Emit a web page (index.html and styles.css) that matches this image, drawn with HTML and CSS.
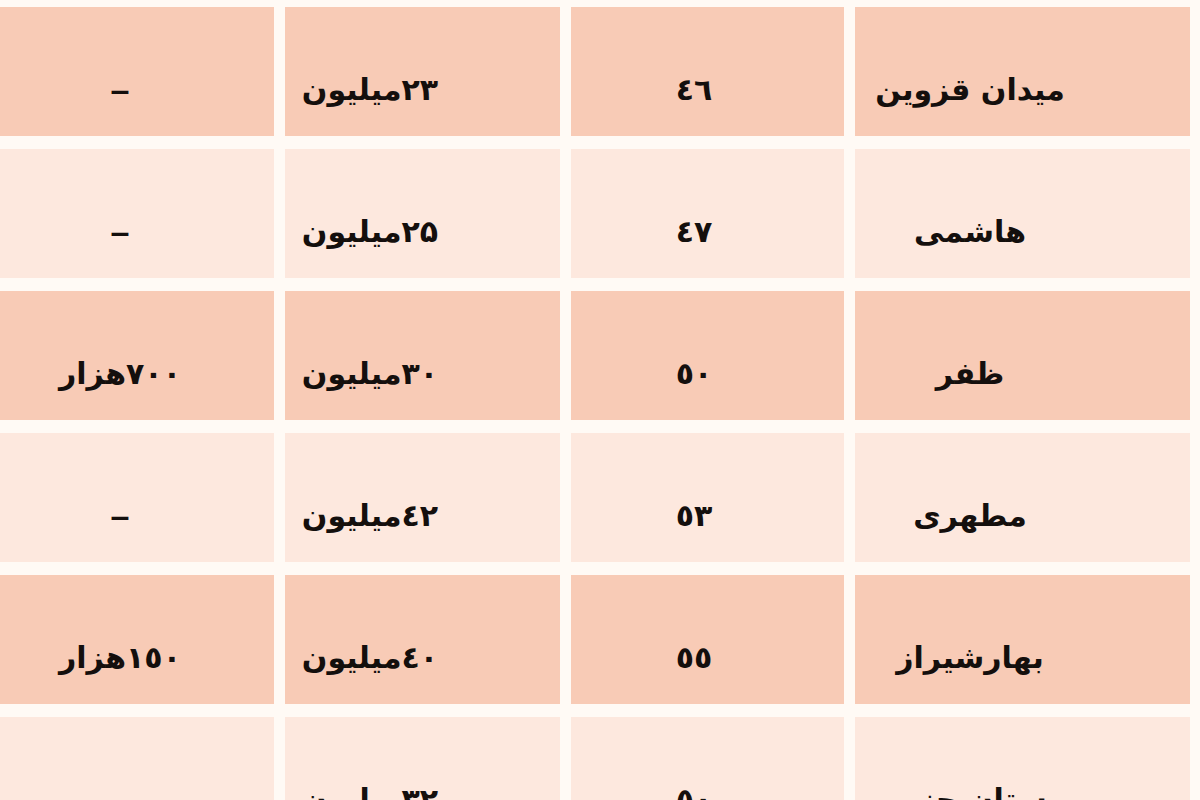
FILE: index.html
```html
<!DOCTYPE html>
<html lang="fa" dir="rtl">
<head>
<meta charset="utf-8">
<title>جدول</title>
<link rel="stylesheet" href="styles.css">
</head>
<body>
<div class="table">
  <div class="cell dark c-name">میدان قزوین</div>
  <div class="cell dark c-num">٤٦</div>
  <div class="cell dark c-price">۲۳میلیون</div>
  <div class="cell dark c-extra"><span class="dash">–</span></div>

  <div class="cell light c-name">هاشمی</div>
  <div class="cell light c-num">٤٧</div>
  <div class="cell light c-price">۲۵میلیون</div>
  <div class="cell light c-extra"><span class="dash">–</span></div>

  <div class="cell dark c-name">ظفر</div>
  <div class="cell dark c-num">٥٠</div>
  <div class="cell dark c-price">۳۰میلیون</div>
  <div class="cell dark c-extra">۷۰۰هزار</div>

  <div class="cell light c-name">مطهری</div>
  <div class="cell light c-num">٥۳</div>
  <div class="cell light c-price">٤۲میلیون</div>
  <div class="cell light c-extra"><span class="dash">–</span></div>

  <div class="cell dark c-name">بهارشیراز</div>
  <div class="cell dark c-num">٥٥</div>
  <div class="cell dark c-price">٤۰میلیون</div>
  <div class="cell dark c-extra">۱٥۰هزار</div>

  <div class="cell light c-name">بوستان جنوبی</div>
  <div class="cell light c-num">٥۰</div>
  <div class="cell light c-price">۳۲میلیون</div>
  <div class="cell light c-extra"><span class="dash">–</span></div>
</div>
</body>
</html>
```
FILE: styles.css
```css
html, body {
  margin: 0;
  padding: 0;
  height: 100%;
  overflow: hidden;
  background: #fffaf5;
}

.table {
  display: grid;
  direction: rtl;
  grid-template-columns: 335px 273px 275px 274px;
  grid-auto-rows: 129px;
  column-gap: 11px;
  row-gap: 13px;
  padding: 7px 10px 0 0;
  width: 1190px;
  font-family: "DejaVu Sans", sans-serif;
  font-weight: bold;
  font-size: 30px;
  color: #140f0d;
}

.cell {
  display: flex;
  align-items: center;
  justify-content: center;
  padding-top: 36px;
  box-sizing: border-box;
  white-space: nowrap;
}

.dark { background: #f8cbb6; }
.light { background: #fde8de; }

.c-name { padding-right: 105px; }
.c-num { padding-right: 27px; }
.c-price { padding-right: 105px; }
.c-extra { padding-right: 34px; }

.dash {
  font-family: "Liberation Sans", sans-serif;
  font-size: 34px;
}
```
